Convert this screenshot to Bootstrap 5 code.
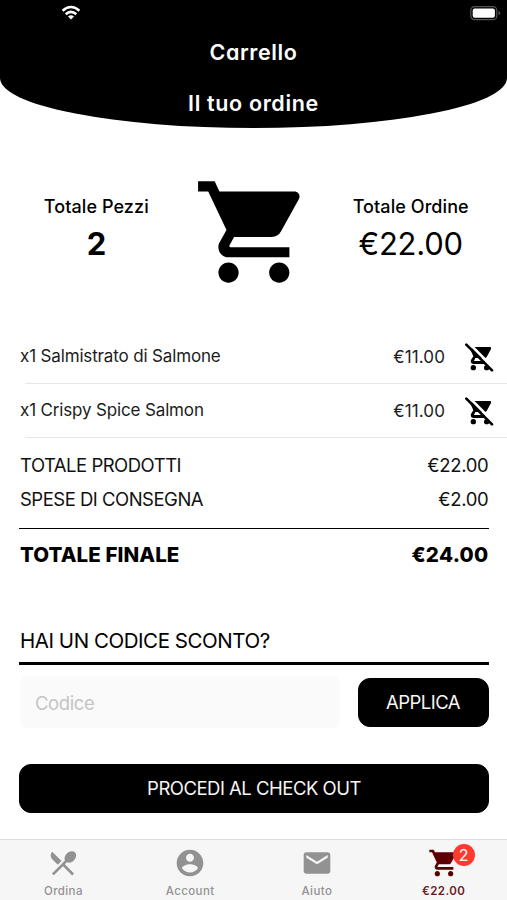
<!DOCTYPE html>
<html lang="it">
<head>
<meta charset="utf-8">
<meta name="viewport" content="width=device-width, initial-scale=1">
<title>Carrello</title>
<link href="https://cdn.jsdelivr.net/npm/bootstrap@5.3.0/dist/css/bootstrap.min.css" rel="stylesheet">
<style>
body{font-family:Inter,"Liberation Sans",sans-serif;color:#000;background:#fff;overflow:hidden}
.screen{height:900px}
.top-bar{height:128px;background:#000;color:#fff;border-radius:0 0 50% 50%/0 0 50px 50px}
.status{height:26px;padding:5px 6px 0 61px}
.heading{font-size:21.5px;line-height:26px;font-weight:600;font-feature-settings:"cv11";margin:0}
.h-one{margin-top:13px;letter-spacing:.6px}
.h-two{margin-top:25px;letter-spacing:.65px}
.summary{height:124px;margin-top:43px}
.side{width:193px;padding-top:25px}
.side-label{font-size:18px;line-height:22px;font-weight:500;letter-spacing:.08px}
.side-value{font-size:31px;line-height:38px;margin-top:7px;letter-spacing:-.2px}
.items{margin-top:35px}
.line-item{height:53px;padding:0 13px 0 20px}
.line-item svg{margin-top:2px}
.item-text{font-size:17px;line-height:22px;color:#1c1c1c;letter-spacing:-.15px}
.item-name{padding-bottom:2px}
.price{margin-right:20px;letter-spacing:.1px;padding-top:1px}
.item-rule{height:1px;background:#e8e8e8;margin-left:25px}
.sum-row{font-size:18.5px;line-height:24px;color:#111;letter-spacing:-.5px}
.sum-row span:last-child{letter-spacing:-.3px}
.sum-first{padding-top:15px}
.sum-second{padding-top:10px}
.px-20{padding-left:20px;padding-right:18.5px}
.px-19{padding-left:19px;padding-right:18px}
.thin{height:1px;background:#000;margin:17px 18px 0 19px}
.thick{height:2.5px;background:#000;margin:8px 18px 0 19px}
.final{font-size:20.5px;line-height:26px;font-weight:800;margin-top:12.5px;letter-spacing:.1px}
.final span:last-child{letter-spacing:.3px}
.promo{font-size:20.5px;line-height:26px;margin-top:60.5px;letter-spacing:-.45px}
.code-row{margin-top:11.5px}
.code-input,.code-input:focus{width:320px;height:52px;background:#fafafa;border:0;border-radius:8px;font-size:18.5px;padding:2px 15px 0;letter-spacing:-.4px}
.code-input::placeholder{color:#c4c4c4;opacity:1}
.btn-ink{--bs-btn-color:#f5f5f5;--bs-btn-bg:#000;--bs-btn-border-color:#000;--bs-btn-hover-bg:#222;--bs-btn-hover-color:#fff;height:49px;border-radius:12px;font-size:18.5px;padding:1px 0 0;letter-spacing:-.5px}
.apply{width:131px}
.checkout{margin-top:36px}
.tabs{height:61px;background:#f6f6f6;border-top:1px solid #dcdcdc;color:#929292}
.tab-link{font-size:11.5px;line-height:14px;font-weight:500;letter-spacing:.4px;padding-top:7px;color:inherit;text-decoration:none}
.tab-link svg{width:32px;height:32px;margin-bottom:5px}
.cart-tab{width:32px}
.current{color:#6b1a22;font-weight:600;letter-spacing:.4px}
.current svg{color:#5c0004}
.count{left:25px;top:-3px;width:22px;height:22px;background:#ff3b30;color:#fff;font-size:16px;line-height:22px;font-weight:400;letter-spacing:0}
</style>
</head>
<body>
<svg class="d-none"><defs>
<path id="cart" d="M7 18c-1.1 0-1.99.9-1.99 2S5.900 22 7 22s2-.9 2-2-.9-2-2-2zM1 2v2h2l3.600 7.590-1.350 2.450c-.16.28-.25.61-.25.96 0 1.100.9 2 2 2h12v-2H7.420c-.14 0-.25-.11-.25-.25l.03-.12.9-1.630h7.450c.75 0 1.410-.41 1.750-1.030l3.580-6.490c.08-.14.12-.31.12-.48 0-.55-.45-1-1-1H5.210l-.94-2H1zm16 16c-1.100 0-1.990.9-1.990 2s.89 2 1.990 2 2-.9 2-2-.9-2-2-2z"/>
<g id="cart-off">
<path d="M21 12H76Q80 13 78 18L65 42Q63 45 59 45H31L27 54H60V63H25Q15 61 18 51L25 40L17 22Z"/>
<circle cx="25" cy="74" r="8"/><circle cx="65" cy="74" r="8"/>
<path d="M8 -3L91 80" stroke="#fff" stroke-width="8"/>
<path d="M4 5L81 82" stroke="#000" stroke-width="8" stroke-linecap="round"/>
</g>
</defs></svg>
<div class="screen d-flex flex-column">
  <header class="top-bar text-center">
    <div class="status d-flex justify-content-between align-items-start">
      <svg width="20" height="15" viewBox="0 0 20 15" fill="none" stroke="#fff" stroke-width="2.600"><path d="M1.600 5.700Q10-1.700 18.400 5.700M4.700 9.200Q10 4.700 15.300 9.200"/><path d="M7 11.500Q10 9.100 13 11.500L10 14.600Z" fill="#fff" stroke="none"/></svg>
      <svg width="31" height="16" viewBox="0 0 31 16"><rect x=".8" y="1.600" width="26" height="13" rx="3.700" fill="none" stroke="#555" stroke-width="1.200"/><rect x="2.700" y="3.500" width="22.200" height="9.200" rx="2" fill="#fff"/><path d="M28.500 5.700Q32.300 8 28.500 10.500Z" fill="#555"/></svg>
    </div>
    <h1 class="heading h-one">Carrello</h1>
    <h2 class="heading h-two">Il tuo ordine</h2>
  </header>
  <section class="summary d-flex text-center">
    <div class="side"><div class="side-label">Totale Pezzi</div><div class="side-value fw-bold">2</div></div>
    <svg width="122" height="122" viewBox="0 0 24 24"><use href="#cart"/></svg>
    <div class="side ms-auto"><div class="side-label">Totale Ordine</div><div class="side-value">€22.00</div></div>
  </section>
  <section class="items">
    <div class="line-item d-flex align-items-center"><span class="item-text item-name">x1 Salmistrato di Salmone</span><span class="item-text ms-auto price">€11.00</span><svg width="29" height="29" viewBox="0 0 87 87"><use href="#cart-off"/></svg></div>
    <div class="item-rule"></div>
    <div class="line-item d-flex align-items-center"><span class="item-text item-name">x1 Crispy Spice Salmon</span><span class="item-text ms-auto price">€11.00</span><svg width="29" height="29" viewBox="0 0 87 87"><use href="#cart-off"/></svg></div>
    <div class="item-rule"></div>
  </section>
  <section>
    <div class="sum-row sum-first px-20 d-flex justify-content-between"><span>TOTALE PRODOTTI</span><span>€22.00</span></div>
    <div class="sum-row sum-second px-20 d-flex justify-content-between"><span>SPESE DI CONSEGNA</span><span>€2.00</span></div>
    <div class="thin"></div>
    <div class="final px-20 d-flex justify-content-between"><span>TOTALE FINALE</span><span>€24.00</span></div>
  </section>
  <section>
    <div class="promo px-20">HAI UN CODICE SCONTO?</div>
    <div class="thick"></div>
    <div class="px-20 code-row d-flex justify-content-between align-items-center"><input class="form-control code-input" placeholder="Codice" aria-label="Codice"><button class="btn btn-ink apply">APPLICA</button></div>
    <div class="px-19"><button class="btn btn-ink w-100 checkout">PROCEDI AL CHECK OUT</button></div>
  </section>
  <nav class="tabs d-flex mt-auto text-center">
    <a class="tab-link col" href="#"><svg class="d-block mx-auto" viewBox="0 0 24 24" fill="currentColor"><path d="M8.100 13.340l2.830-2.830L3.910 3.500c-1.560 1.560-1.560 4.090 0 5.660l4.190 4.180zm6.780-1.810c1.530.71 3.680.21 5.270-1.380 1.910-1.910 2.280-4.650.81-6.120-1.460-1.460-4.200-1.100-6.120.81-1.590 1.590-2.090 3.740-1.380 5.270L3.700 19.870l1.410 1.410L12 14.410l6.880 6.880 1.410-1.410L13.410 13l1.470-1.470z"/></svg>Ordina</a>
    <a class="tab-link col" href="#"><svg class="d-block mx-auto" viewBox="0 0 24 24" fill="currentColor"><path d="M12 2C6.480 2 2 6.480 2 12s4.480 10 10 10 10-4.480 10-10S17.520 2 12 2zm0 3c1.660 0 3 1.340 3 3s-1.340 3-3 3-3-1.340-3-3 1.340-3 3-3zm0 14.200c-2.500 0-4.710-1.280-6-3.220.03-1.990 4-3.080 6-3.080 1.990 0 5.970 1.090 6 3.080-1.290 1.940-3.500 3.220-6 3.220z"/></svg>Account</a>
    <a class="tab-link col" href="#"><svg class="d-block mx-auto" viewBox="0 0 24 24" fill="currentColor"><path d="M20 4H4c-1.100 0-1.990.9-1.990 2L2 18c0 1.100.9 2 2 2h16c1.100 0 2-.9 2-2V6c0-1.100-.9-2-2-2zm0 4l-8 5-8-5V6l8 5 8-5v2z"/></svg>Aiuto</a>
    <a class="tab-link col current" href="#"><span class="d-block position-relative mx-auto cart-tab"><svg class="d-block" viewBox="0 0 24 24" fill="currentColor"><use href="#cart"/></svg><span class="count position-absolute rounded-circle">2</span></span>€22.00</a>
  </nav>
</div>
<script src="https://cdn.jsdelivr.net/npm/bootstrap@5.3.0/dist/js/bootstrap.bundle.min.js"></script>
</body>
</html>
